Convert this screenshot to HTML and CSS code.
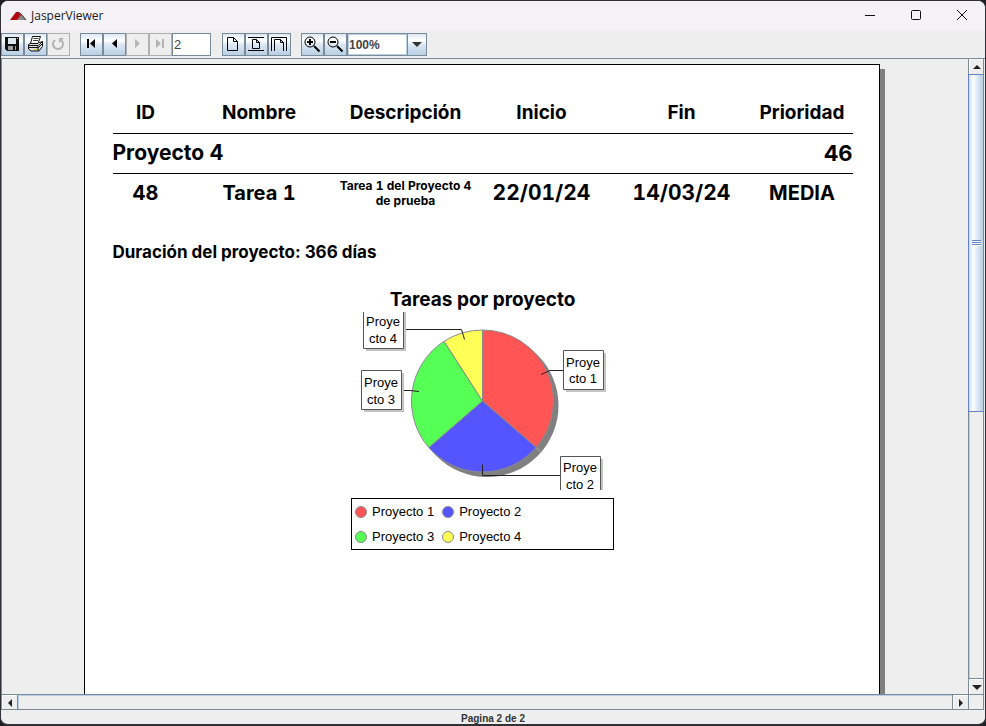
FILE: index.html
```html
<!DOCTYPE html>
<html lang="es">
<head>
<meta charset="utf-8">
<title>JasperViewer</title>
<link rel="stylesheet" href="styles.css">
</head>
<body>
<div class="window">
  <header class="titlebar">
    <svg class="logo" width="18" height="10" viewBox="0 0 18 10" aria-hidden="true">
      <path d="M8 9 12 3 17 9z" fill="#8b8b8b"/>
      <path d="M1 9 7 1h2l3 3-4 5z" fill="#b00710"/>
      <path d="M9 1l3 2 5 6" fill="none" stroke="#4b1719"/>
    </svg>
    <h1 class="title">JasperViewer</h1>
    <div class="caption-buttons">
      <button aria-label="Minimizar"><svg width="12" height="12" viewBox="0 0 12 12"><path d="M1 5.500h10"/></svg></button>
      <button aria-label="Maximizar"><svg width="12" height="12" viewBox="0 0 12 12"><rect x="1.500" y="0.500" width="9" height="9" rx="1"/></svg></button>
      <button aria-label="Cerrar"><svg width="12" height="12" viewBox="0 0 12 12"><path d="M1 0l10 10M11 0 1 10"/></svg></button>
    </div>
  </header>

  <nav class="toolbar">
    <div class="group">
      <button class="tool" aria-label="Guardar">
        <svg width="17" height="17" viewBox="0 0 17 17"><path d="M1 1h14v14H3l-2-2z" fill="#111"/><path d="M4 2h8v6H4z" fill="#dfe7ef"/><path d="M4 10h8v4H4z" fill="#a0a0a0"/><path d="M9 10h2v4H9z" fill="#111"/><path d="M13 2.500h1" stroke="#ddd"/></svg>
      </button>
      <button class="tool" aria-label="Imprimir">
        <svg width="17" height="17" viewBox="0 0 17 17"><path d="M1.500 8.500l3-2h8l3-1v5l-3.500 4.500h-8l-2.500-2z" fill="#ddd" stroke="#111"/><path d="M5.500 0.500h8l-2.500 7H3.500z" fill="#fff" stroke="#111"/><path d="M6.500 2.500h5M6 4.500h5" stroke="#444"/><path d="M1.500 9.500h9.500v5M11.500 9.500l4-4M1.500 11.500h10l4-4" fill="none" stroke="#111"/><path d="M7 13.500h3" stroke="#c9c238"/></svg>
      </button>
      <button class="tool off" aria-label="Recargar" disabled>
        <svg width="17" height="17" viewBox="0 0 17 17"><path d="M5 4a5 5 0 1 0 6.500 0.500" fill="none" stroke="#b4b4b4" stroke-width="2"/><path d="M9 2h5l-5 5z" fill="#b4b4b4"/></svg>
      </button>
    </div>
    <div class="group">
      <button class="tool" aria-label="Primera página"><svg width="17" height="17" viewBox="0 0 17 17"><path d="M4 3h2v9H4zM12 3v9L7 7.500z"/></svg></button>
      <button class="tool" aria-label="Página anterior"><svg width="17" height="17" viewBox="0 0 17 17"><path d="M11 3v9L6 7.500z"/></svg></button>
      <button class="tool off" aria-label="Página siguiente" disabled><svg width="17" height="17" viewBox="0 0 17 17"><path d="M6 3v9l5-4.500z"/></svg></button>
      <button class="tool off" aria-label="Última página" disabled><svg width="17" height="17" viewBox="0 0 17 17"><path d="M4 3v9l5-4.500zM10 3h2v9h-2z"/></svg></button>
      <input class="page-number" type="text" value="2" aria-label="Número de página">
    </div>
    <div class="group">
      <button class="tool line" aria-label="Tamaño real"><svg width="17" height="17" viewBox="0 0 17 17"><path d="M2.500 1.500h6l4 4v9h-10zM8.500 1.500v4h4"/></svg></button>
      <button class="tool line" aria-label="Ajustar a la página"><svg width="17" height="17" viewBox="0 0 17 17"><path d="M0 1.500h16M0 14.500h16M4.500 3.500h4l3 3v6h-7zM8.500 3.500v3h3"/></svg></button>
      <button class="tool line" aria-label="Ajustar al ancho"><svg width="17" height="17" viewBox="0 0 17 17"><path d="M0.500 15V1.500h15V15M3.500 15V3.500h6l3 3V15M9.500 3.500v3h3"/></svg></button>
    </div>
    <div class="group">
      <button class="tool line" aria-label="Acercar"><svg width="17" height="17" viewBox="0 0 17 17"><circle cx="6" cy="6" r="5"/><path d="M3 6h6M6 3v6M10 10l5.500 5.500" stroke-width="2"/></svg></button>
      <button class="tool line" aria-label="Alejar"><svg width="17" height="17" viewBox="0 0 17 17"><circle cx="6" cy="6" r="5"/><path d="M3 6h6M10 10l5.500 5.500" stroke-width="2"/></svg></button>
      <div class="zoom">
        <select aria-label="Zoom"><option>100%</option></select>
        <span class="zoom-arrow"><svg width="10" height="5" viewBox="0 0 10 5"><path d="M0 0h10L5 5z"/></svg></span>
      </div>
    </div>
  </nav>

  <main class="pane">
    <div class="viewport">
      <article class="sheet">
        <table class="report">
          <colgroup><col class="c-id"><col class="c-name"><col class="c-desc"><col class="c-date"><col class="c-date"><col></colgroup>
          <thead>
            <tr><th>ID</th><th>Nombre</th><th>Descripción</th><th>Inicio</th><th>Fin</th><th>Prioridad</th></tr>
          </thead>
          <tbody>
            <tr class="project"><td colspan="5">Proyecto 4</td><td class="total">46</td></tr>
            <tr class="task"><td>48</td><td>Tarea 1</td><td class="desc">Tarea 1 del Proyecto 4 de prueba</td><td class="date">22/01/24</td><td class="date">14/03/24</td><td>MEDIA</td></tr>
          </tbody>
        </table>
        <p class="duration">Duración del proyecto: 366 días</p>
        <figure class="chart">
          <figcaption>Tareas por proyecto</figcaption>
          <svg class="pie" width="284" height="178" viewBox="341 312 284 178" role="img" aria-label="Tareas por proyecto">
            <circle cx="487" cy="405.500" r="71.500" fill="#808080"/>
            <path d="M536 447.500l6 5" stroke="#aaa"/>
            <g stroke="#8a8a8a" stroke-linejoin="round">
              <path d="M482.500 401V330A71 71 0 0 1 536.200 447.500z" fill="#f55"/>
              <path d="M482.500 401L536.200 447.500A71 71 0 0 1 428.800 447.500z" fill="#55f"/>
              <path d="M482.500 401L428.800 447.500A71 71 0 0 1 444.100 341.300z" fill="#5f5"/>
              <path d="M482.500 401L444.100 341.300A71 71 0 0 1 482.500 330z" fill="#ff5"/>
            </g>
            <g class="leader">
              <path d="M563 370.500H550L541 374.500"/>
              <path d="M560 475.500H482.500V464.500"/>
              <path d="M402 390.500H410L419 391.500"/>
              <path d="M404 329.500H461.500L464.500 339.500"/>
            </g>
            <g class="label-shadow">
              <path d="M566 353h40v39h-40zM563 459h40v31h-40zM364 373h40v39h-40zM366 312h40v39h-40z"/>
            </g>
            <g class="label-box">
              <path d="M563.500 350.500h40v39h-40z"/>
              <path d="M560.500 490V456.500h40V490"/>
              <path d="M361.500 370.500h40v39h-40z"/>
              <path d="M363.500 312V348.500h40V312"/>
            </g>
            <g class="label-text">
              <text x="583" y="367">Proye</text><text x="583" y="383">cto 1</text>
              <text x="580" y="472">Proye</text><text x="580" y="489">cto 2</text>
              <text x="381" y="387">Proye</text><text x="381" y="404">cto 3</text>
              <text x="383" y="326">Proye</text><text x="383" y="343">cto 4</text>
            </g>
          </svg>
          <ul class="legend">
            <li><i class="dot red"></i>Proyecto 1</li>
            <li><i class="dot blue"></i>Proyecto 2</li>
            <li><i class="dot green"></i>Proyecto 3</li>
            <li><i class="dot yellow"></i>Proyecto 4</li>
          </ul>
        </figure>
      </article>
    </div>
    <div class="vbar">
      <button aria-label="Subir"><svg width="8" height="4" viewBox="0 0 8 4"><path d="M0 4h8L4 0z"/></svg></button>
      <div class="vtrack"><div class="thumb"><span class="grip"></span></div></div>
      <button aria-label="Bajar"><svg width="10" height="5" viewBox="0 0 10 5"><path d="M0 0h10L5 5z"/></svg></button>
    </div>
    <div class="hbar">
      <button aria-label="Izquierda"><svg width="4" height="8" viewBox="0 0 4 8"><path d="M4 0v8L0 4z"/></svg></button>
      <div class="htrack"></div>
      <button aria-label="Derecha"><svg width="4" height="8" viewBox="0 0 4 8"><path d="M0 0v8l4-4z"/></svg></button>
    </div>
    <div class="corner"></div>
  </main>

  <footer class="status">Pagina 2 de 2</footer>
</div>
</body>
</html>
```
FILE: styles.css
```css
* { box-sizing: border-box; }

body {
  margin: 0;
  background: #1e1f26;
  color: #000;
  font-family: "Liberation Sans", Arial, sans-serif;
}

button { padding: 0; border: 0; background: none; font: inherit; }
svg { display: block; flex: none; }

.window {
  display: flex;
  flex-direction: column;
  height: 100vh;
  border: 1px solid #303036;
  border-bottom-width: 2px;
  border-radius: 8px;
  background: #eee;
  overflow: hidden;
}

/* Title bar */
.titlebar {
  display: flex;
  align-items: center;
  flex: none;
  height: 30px;
  padding-left: 8px;
  gap: 4px;
  background: #f4f2f4;
}
.title {
  flex: 1;
  margin: 0;
  font: 12px/16px "Open Sans", "Noto Sans", sans-serif;
  color: #1a1a1a;
}
.caption-buttons { display: flex; }
.caption-buttons button {
  display: flex;
  align-items: center;
  justify-content: center;
  width: 46px;
  height: 30px;
}
.caption-buttons svg { fill: none; stroke: #111; }

/* Toolbar */
.toolbar {
  display: flex;
  flex: none;
  gap: 10px;
  padding: 2px 0;
  border-bottom: 1px solid #7a8a99;
}
.group { display: flex; }
.tool {
  display: flex;
  align-items: center;
  justify-content: center;
  width: 23px;
  height: 23px;
  border: 1px solid #7a8a99;
  background: linear-gradient(#dde8f3, #fff 30%, #dde8f3 50%, #b8cfe5);
}
.tool.off { border-color: #b0b0b0; background: #eee; }
.tool.off svg { fill: #b4b4b4; }
.tool.line svg { fill: none; stroke: #000; }
.page-number {
  width: 39px;
  height: 23px;
  padding: 0 1px;
  border: 1px solid #7a8a99;
  background: #fff;
  color: #444;
  font: 13px "Liberation Sans", Arial, sans-serif;
}
.group:has(.page-number) { margin-right: 1px; }
.zoom { display: flex; border: 1px solid #7a8a99; height: 23px; }
.zoom select {
  appearance: none;
  width: 59px;
  padding: 0;
  border: 1px solid #b8cfe5;
  border-radius: 0;
  background: #fff;
  color: #444;
  font: bold 12px "Liberation Sans", Arial, sans-serif;
}
.zoom-arrow {
  display: flex;
  align-items: center;
  justify-content: center;
  width: 19px;
  border-left: 1px solid #7a8a99;
  background: linear-gradient(#dde8f3, #fff 30%, #dde8f3 50%, #b8cfe5);
}
.zoom-arrow svg { fill: #333; }

/* Report area */
.pane {
  display: grid;
  grid-template: minmax(0, 1fr) 16px / minmax(0, 1fr) 16px;
  flex: 1;
  min-height: 0;
  margin-right: 1px;
  border-left: 1px solid #7a8a99;
}
.viewport { overflow: hidden; padding: 5px 7px 0 0; }
.sheet {
  width: 796px;
  height: 1100px;
  margin: 0 auto;
  padding: 28px 26px 0 28px;
  border: 1px solid #000;
  background: #fff;
  box-shadow: 5px 5px 0 #808080;
  font-family: Inter, "Liberation Sans", sans-serif;
  font-weight: 700;
}

.report {
  width: 740px;
  table-layout: fixed;
  border-collapse: collapse;
  text-align: center;
  font-variant-numeric: tabular-nums;
}
.c-id { width: 66px; }
.c-name { width: 161px; }
.c-desc { width: 132px; }
.c-date { width: 140px; }
.report th, .report td { height: 40px; padding: 0; line-height: 24px; }
.report th { padding-top: 1px; font-size: 19px; border-bottom: 1px solid #000; }
.project td { font-size: 21px; text-align: left; border-bottom: 1px solid #000; }
.project .total { font-size: 22px; text-align: right; }
.task td { font-size: 20px; }
.task .date { font-size: 21px; }
.task .desc { font-size: 12px; line-height: 15px; }

.duration { margin: 27px 0 0; font-size: 17px; line-height: 24px; }

.chart { display: flex; flex-direction: column; align-items: center; margin: 24px 0 0; }
.chart figcaption { font-size: 19px; line-height: 24px; }
.pie { overflow: visible; }
.leader { fill: none; stroke: #222; }
.label-shadow { fill: #c4c4c4; }
.label-box { fill: #fff; stroke: #555; }
.label-text { font: 13px "Liberation Sans", Arial, sans-serif; text-anchor: middle; }

.legend {
  display: grid;
  grid-template-columns: auto auto;
  justify-content: start;
  column-gap: 8px;
  width: 263px;
  margin: 8px 0 0;
  padding: 0 3px;
  border: 1px solid #000;
  list-style: none;
  font: 13px/25px "Liberation Sans", Arial, sans-serif;
}
.legend li { display: flex; align-items: center; gap: 5px; padding-top: 0; }
.dot { width: 12px; height: 12px; border: 1px solid #8a8a8a; border-radius: 50%; }
.red { background: #f55; }
.blue { background: #55f; }
.green { background: #5f5; }
.yellow { background: #ff5; }

/* Scroll bars */
.vbar {
  display: flex;
  flex-direction: column;
  border: 1px solid #7a8a99;
  border-width: 0 1px;
}
.vbar button, .hbar button {
  display: flex;
  flex: none;
  align-items: center;
  justify-content: center;
  width: 14px;
  height: 15px;
  border: 1px solid #fff;
  border-width: 1px 0 0 1px;
  background: #eee;
}
.vbar svg, .hbar svg { fill: #222; }
.vtrack { flex: 1; border-bottom: 1px solid #7a8a99; box-shadow: inset 1px 0 #b8cfe5; }
.thumb {
  display: flex;
  align-items: center;
  justify-content: center;
  height: 56%;
  margin-left: -1px;
  border: 1px solid #6382bf;
  border-right: 0;
  background: linear-gradient(90deg, #c8dcf0, #fff 30%, #dde8f3 60%, #b8cfe5);
}
.grip {
  width: 9px;
  height: 6px;
  background: repeating-linear-gradient(#6382bf 0 1px, #fff 1px 2px);
}
.hbar { display: flex; border: 1px solid #7a8a99; border-width: 1px 0; }
.hbar button { width: 15px; height: 14px; }
.htrack {
  flex: 1;
  border: 1px solid #7a8a99;
  border-width: 0 1px;
  box-shadow: inset 1px 1px #b8cfe5;
}
.corner { border: 1px solid #7a8a99; }

.status {
  flex: none;
  height: 14px;
  color: #333;
  font-size: 10px;
  font-weight: 700;
  line-height: 17px;
  text-align: center;
}
```
